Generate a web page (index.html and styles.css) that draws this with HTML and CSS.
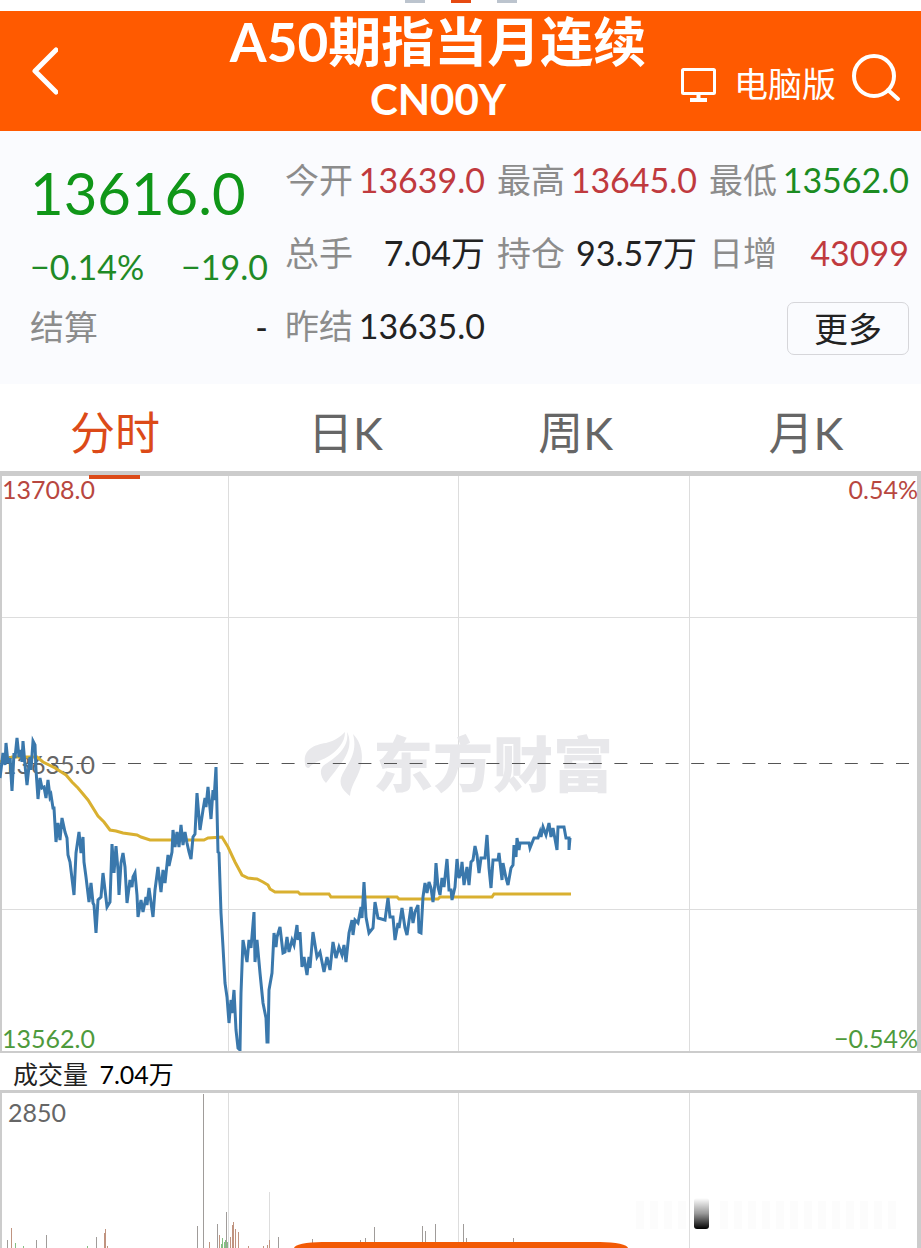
FILE: index.html
```html
<!DOCTYPE html>
<html lang="zh-CN">
<head>
  <meta charset="UTF-8">
  <meta name="viewport" content="width=device-width, initial-scale=1.0">
  <title>A50期指当月连续</title>
  <link rel="stylesheet" href="styles.css">
</head>
<body>
  <!-- Page markers -->
  <div class="pager">
    <span></span>
    <span class="current"></span>
    <span></span>
  </div>

  <!-- Header -->
  <header class="header">
    <button class="back" type="button" aria-label="返回">
      <svg width="28" height="48" viewBox="0 0 28 48"><path d="M26 3 5 24 26 45" fill="none" stroke="#fff" stroke-width="5" stroke-linecap="round" stroke-linejoin="round"/></svg>
    </button>
    <div class="title">
      <h1>A50期指当月连续</h1>
      <p>CN00Y</p>
    </div>
    <nav class="tools">
      <a class="desktop" href="#">
        <svg width="36" height="36" viewBox="0 0 36 36" fill="none" stroke="#fff" stroke-width="3"><rect x="2.500" y="3.500" width="32" height="24" rx="1"/><path stroke-width="4" d="M18.500 27v6M10 34h17"/></svg>
        <span>电脑版</span>
      </a>
      <button class="search" type="button" aria-label="搜索">
        <svg width="50" height="50" viewBox="0 0 50 50" fill="none" stroke="#fff" stroke-width="4" stroke-linecap="round"><circle cx="23" cy="22" r="20"/><path d="M37 36 47 45"/></svg>
      </button>
    </nav>
  </header>

  <!-- Quote -->
  <section class="quote">
    <div class="summary">
      <div class="price">13616.0</div>
      <div class="change"><span>−0.14%</span><span>−19.0</span></div>
      <div class="settle"><span class="label">结算</span><span>-</span></div>
    </div>
    <dl class="stats">
      <div><dt>今开</dt><dd class="up">13639.0</dd></div>
      <div><dt>最高</dt><dd class="up">13645.0</dd></div>
      <div><dt>最低</dt><dd class="down">13562.0</dd></div>
      <div><dt>总手</dt><dd>7.04万</dd></div>
      <div><dt>持仓</dt><dd>93.57万</dd></div>
      <div><dt>日增</dt><dd class="up">43099</dd></div>
      <div><dt>昨结</dt><dd>13635.0</dd></div>
    </dl>
    <button class="more" type="button">更多</button>
  </section>

  <!-- Period tabs -->
  <nav class="tabs">
    <a class="active" href="#">分时</a>
    <a href="#">日K</a>
    <a href="#">周K</a>
    <a href="#">月K</a>
  </nav>

  <!-- Price chart -->
  <section class="chart">
    <svg viewBox="0 476 921 575">
      <path class="grid" d="M228.500 476V1051M458.500 476V1051M689.500 476V1051M2 617.500H917M2 909.500H917"/>
      <g class="watermark">
        <path d="M305 764C303 750 313 745 326 743C335 741 341 736 345 732C345 742 338 750 329 756C321 761 313 762 309 768C306 768 305 766 305 764Z"/>
        <path d="M347 732C352 741 349 753 342 762C337 769 332 775 326 783C321 778 319 771 323 766C331 760 350 750 347 732Z"/>
        <path d="M353 734C363 744 364 760 359 772C355 782 351 786 350 796C344 791 339 786 341 778C344 767 359 756 353 734Z"/>
        <text x="373" y="787">东方财富</text>
      </g>
      <path class="base-line" d="M0 763.500H917"/>
      <text class="axis up" x="2" y="499">13708.0</text>
      <text class="axis up end" x="918" y="499">0.54%</text>
      <text class="axis" x="2" y="774">13635.0</text>
      <text class="axis down" x="2" y="1048">13562.0</text>
      <text class="axis down end" x="918" y="1048">−0.54%</text>
      <polyline class="average" points="0,762 12,757 37,757 43,762 55,768 66,775 72,782 78,788 88,800 98,816 104,822 110,830 116,831 123,833 137,835 141,837 150,840 204,840 208,838 222,837 228,847 235,862 242,875 248,878 257,879 263,882 268,885 270,889 275,892 298,892 300,894 329,894 331,897 397,897 399,899 438,899 440,897 492,897 494,894 571,894"/>
      <polyline class="price-line" points="0,778 3,753 5,765 6,743 8,763 10,758 12,791 14,753 15,758 17,738 19,757 21,750 22,762 23,741 25,765 27,785 30,757 31,770 33,741 35,745 36,770 38,799 40,778 42,788 44,787 46,798 48,780 50,797 51,795 53,808 54,808 56,842 58,823 60,840 62,818 65,832 67,838 68,855 70,862 74,895 76,853 79,832 81,853 83,837 84,862 86,877 89,902 91,883 93,903 94,905 96,933 98,900 101,897 103,873 105,890 107,907 110,902 112,844 114,873 116,846 118,870 119,895 121,863 123,853 125,867 127,903 130,880 132,887 133,877 135,873 137,895 138,917 141,900 143,912 146,897 147,905 149,888 153,917 155,890 158,867 161,892 163,870 165,883 168,855 169,866 172,852 173,830 175,847 177,832 179,847 181,825 183,845 185,832 187,843 189,852 191,859 193,837 195,834 197,793 200,830 203,810 205,798 206,807 208,787 211,819 213,790 214,800 216,767 218,852 219,853 221,913 223,947 225,983 227,997 229,1023 231,1000 232,1013 234,990 236,1030 238,1048 240,1050 241,993 243,940 247,962 249,940 251,948 254,912 255,962 257,940 260,973 263,1003 266,1018 267,1042 268,1042 269,990 272,973 274,933 276,947 277,937 280,927 283,953 285,952 287,937 289,952 292,940 294,945 297,925 298,940 300,932 302,967 304,957 307,975 309,957 310,968 313,932 317,957 320,952 324,972 327,957 330,970 333,942 336,958 339,947 342,955 344,945 346,962 349,933 352,920 353,935 355,920 358,923 361,907 362,918 364,882 366,917 369,933 373,928 375,902 378,918 385,920 388,898 390,917 393,917 395,940 398,923 399,928 402,908 405,928 407,935 411,907 413,923 415,912 418,905 419,932 421,933 423,897 425,883 427,893 429,882 431,888 433,902 435,883 436,863 438,887 440,895 442,878 444,887 447,859 449,890 451,890 452,900 455,887 457,859 459,878 461,873 462,862 464,885 467,867 469,885 471,862 473,860 475,846 477,855 479,873 481,858 485,858 487,835 489,868 491,888 493,860 498,860 499,853 502,880 503,863 506,878 508,885 511,868 513,865 514,845 516,857 517,838 519,850 520,843 529,843 530,848 532,843 534,838 538,838 540,832 541,837 543,827 546,835 549,823 551,837 553,828 557,850 558,827 564,827 566,838 569,838 569,850 570,838"/>
    </svg>
  </section>

  <p class="volume-title">成交量 <span>7.04万</span></p>

  <!-- Volume chart -->
  <section class="volume">
    <svg viewBox="0 1093 921 155">
      <defs>
        <linearGradient id="fade" x1="0" y1="0" x2="0" y2="1">
          <stop offset="0" stop-color="#000" stop-opacity="0"/>
          <stop offset="0.500" stop-color="#000" stop-opacity="0.400"/>
          <stop offset="1" stop-color="#000"/>
        </linearGradient>
      </defs>
      <path class="grid" d="M228.500 1093V1248M458.500 1093V1248M689.500 1093V1248"/>
      <text class="axis" x="8" y="1122">2850</text>
      <path class="bar light" d="M269.500 1192V1248"/>
      <path class="bar" d="M203.500 1094V1248M197.500 1226V1248M226.500 1212V1248M217.500 1224V1248M7.500 1240V1248M46.500 1235V1248M36.500 1240V1248M96.500 1237V1248M278.500 1237V1248M374.500 1227V1248M422.500 1226V1248M425.500 1231V1248M435.500 1224V1248M463.500 1224V1248M466.500 1238V1248M513.500 1238V1248M312.500 1239V1248M365.500 1238V1248M360.500 1240V1248"/>
      <path class="bar rise" d="M11.500 1228V1248M104.500 1233V1248M105.500 1229V1248M107.500 1246V1248M209.500 1242V1248M219.500 1235V1248M230.500 1237V1248M232.500 1225V1248M233.500 1222V1248M235.500 1229V1248M238.500 1232V1248M248.500 1246V1248M263.500 1246V1248M267.500 1245V1248M269.500 1240V1248"/>
      <path class="bar fall" d="M15.500 1243V1248M23.500 1246V1248M87.500 1246V1248M221.500 1244V1248M222.500 1238V1248M224.500 1242V1248M225.500 1240V1248M227.500 1242V1248"/>
      <path class="ghost" d="M636 1215H688M720 1215H902"/>
      <rect x="694" y="1198" width="15" height="31" rx="3" fill="url(#fade)"/>
    </svg>
  </section>
  <div class="drawer"></div>
</body>
</html>
```
FILE: styles.css
```css
/* General styling */
* {
  box-sizing: border-box;
}
body {
  position: relative;
  margin: 0;
  overflow: hidden;
  background-color: #fff;
  color: #222;
  font-family: Lato, "Noto Sans CJK SC", sans-serif;
  font-size: 34px;
  line-height: 48px;
}
button {
  padding: 0;
  border: none;
  background: none;
  color: inherit;
  font: inherit;
  cursor: pointer;
}
a {
  color: inherit;
  text-decoration: none;
}
svg {
  display: block;
}
h1, p, dl, dd {
  margin: 0;
}
.pager {
  display: flex;
  justify-content: center;
  gap: 26px;
  height: 11px;
}
.pager span {
  width: 20px;
  height: 3px;
  background-color: #bcc4ce;
}
.pager .current {
  background-color: #e64a12;
}

/* Header */
.header {
  display: grid;
  grid-template-columns: 204px 1fr 249px;
  height: 120px;
  background-color: #ff5a00;
  color: #fff;
}
.back {
  padding-left: 30px;
}
.title {
  text-align: center;
  white-space: nowrap;
  font-weight: bold;
}
.title h1 {
  font-size: 53px;
  line-height: 62px;
}
.title p {
  font-size: 42px;
  line-height: 52px;
}
.tools {
  display: flex;
  align-items: center;
  justify-content: space-between;
  padding: 16px 20px 0 8px;
}
.desktop {
  display: flex;
  align-items: center;
  gap: 18px;
  padding-top: 10px;
}

/* Quote */
.quote {
  position: relative;
  display: grid;
  grid-template-columns: 238fr 624fr;
  column-gap: 17px;
  padding: 12px 12px 22px 30px;
  background-color: #fafbfe;
}
.price {
  color: #109618;
  font-size: 58px;
  line-height: 100px;
}
.change, .settle {
  display: flex;
  justify-content: space-between;
  align-items: center;
}
.change {
  height: 48px;
  color: #1f8a26;
}
.settle {
  height: 71px;
}
.label, dt {
  color: #8c8c8c;
}
.stats {
  display: grid;
  grid-template-columns: repeat(3, 1fr);
  grid-auto-rows: 73px;
  column-gap: 12px;
}
.stats div {
  display: flex;
  align-items: center;
  justify-content: space-between;
  white-space: nowrap;
}
.up {
  color: #c03a3e;
}
.down {
  color: #1b8c22;
}
.more {
  position: absolute;
  right: 12px;
  bottom: 29px;
  width: 122px;
  height: 53px;
  border: 1px solid #d6d6da;
  border-radius: 7px;
}

/* Period tabs */
.tabs {
  display: grid;
  grid-template-columns: repeat(4, 1fr);
  height: 87px;
  color: #666;
  font-size: 45px;
  text-align: center;
}
.tabs a {
  height: 87px;
  padding-top: 3px;
  line-height: 92px;
}
.tabs .active {
  position: relative;
  color: #dc4a18;
}
.tabs .active::after {
  content: "";
  position: absolute;
  left: 50%;
  bottom: -8px;
  width: 51px;
  height: 4px;
  margin-left: -26px;
  background-color: #dc4a18;
}

/* Charts */
.chart {
  border-top: 5px solid #ccc;
  border-bottom: 2px solid #ccc;
}
.volume {
  border-top: 3px solid #ccc;
}
.chart, .volume {
  background: linear-gradient(#ccc, #ccc) left / 2px 100% no-repeat,
    linear-gradient(#ccc, #ccc) right / 4px 100% no-repeat;
}
.chart svg, .volume svg {
  width: 100%;
}
.grid {
  fill: none;
  stroke: #ddd;
}
.base-line {
  stroke: #555;
  stroke-width: 1;
  stroke-dasharray: 13 12.600;
}
.watermark {
  fill: #e8e8eb;
}
.watermark text {
  font-size: 60px;
  font-weight: 900;
}
.axis {
  fill: #666;
  font-size: 25px;
}
.axis.up {
  fill: #b8473f;
}
.axis.down {
  fill: #4e9a3c;
}
.axis.end {
  text-anchor: end;
}
.average, .price-line {
  fill: none;
  stroke-width: 3;
}
.average {
  stroke: #d9b030;
}
.price-line {
  stroke: #3a78ac;
}
.volume-title {
  height: 37px;
  padding-left: 13px;
  font-size: 25px;
  line-height: 42px;
}
.volume-title span {
  padding-left: 5px;
  color: #000;
}
.bar {
  stroke: #a09c9a;
}
.bar.light {
  stroke: #ddd;
}
.bar.rise {
  stroke: #c09480;
}
.bar.fall {
  stroke: #83c083;
}
.ghost {
  stroke: #fcfcfc;
  stroke-width: 28;
  stroke-dasharray: 8 6;
}

/* Top edge of the bottom drawer */
.drawer {
  position: absolute;
  left: 50%;
  bottom: 0;
  width: 334px;
  height: 6px;
  margin-left: -167px;
  border-radius: 28px 28px 0 0 / 6px 6px 0 0;
  background-color: #f25a05;
}
```
